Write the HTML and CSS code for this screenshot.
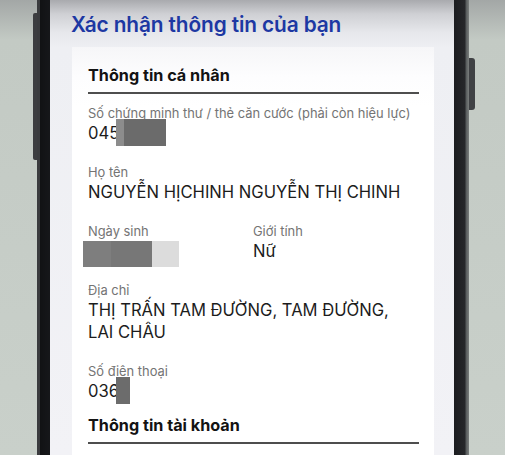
FILE: index.html
```html
<!DOCTYPE html>
<html lang="vi">
<head>
<meta charset="utf-8">
<link rel="stylesheet" href="styles.css">
</head>
<body>
<div class="scene">
  <div class="bg bg-left"></div>
  <div class="frame frame-left"><span class="btn btn-left"></span></div>
  <div class="screen">
    <h1 class="title">Xác nhận thông tin của bạn</h1>
    <div class="card">
      <div class="section-title">Thông tin cá nhân</div>
      <div class="divider"></div>
      <div class="fields">
        <div class="field">
          <div class="label">Số chứng minh thư / thẻ căn cước (phải còn hiệu lực)</div>
          <div class="value">045<span class="redact r-id"><span class="r-a"></span><span class="r-b"></span></span></div>
        </div>
        <div class="field">
          <div class="label">Họ tên</div>
          <div class="value">NGUYỄN HỊCHINH NGUYỄN THỊ CHINH</div>
        </div>
        <div class="field two-col">
          <div class="col">
            <div class="label">Ngày sinh</div>
            <div class="value"><span class="redact r-dob"><span class="d-a"></span><span class="d-b"></span><span class="d-c"></span></span></div>
          </div>
          <div class="col">
            <div class="label">Giới tính</div>
            <div class="value">Nữ</div>
          </div>
        </div>
        <div class="field">
          <div class="label">Địa chỉ</div>
          <div class="value">THỊ TRẤN TAM ĐƯỜNG, TAM ĐƯỜNG,<br>LAI CHÂU</div>
        </div>
        <div class="field">
          <div class="label">Số điện thoại</div>
          <div class="value">036<span class="redact r-phone"></span></div>
        </div>
      </div>
      <div class="section-title second">Thông tin tài khoản</div>
      <div class="divider"></div>
    </div>
  </div>
  <div class="frame frame-right"><span class="btn btn-right"></span></div>
  <div class="bg bg-right"></div>
</div>
</body>
</html>
```

FILE: styles.css
```css
html, body {
  margin: 0;
  padding: 0;
  width: 505px;
  height: 455px;
  overflow: hidden;
  background: #c8cfc9;
  font-family: "Inter", "Noto Sans", sans-serif;
}

.scene {
  display: flex;
  width: 505px;
  height: 455px;
  background: linear-gradient(to bottom, #a3a7a6 0, #c3cac4 40px, #c9d0ca 100%);
}

.bg-left { width: 37px; flex: none; }
.bg-right { flex: 1; }

.frame {
  flex: none;
  position: relative;
  height: 455px;
}
.frame-left {
  width: 13px;
  background: linear-gradient(to right, #3a3b3e 0, #3a3b3e 3px, #111214 3px, #16171a 100%);
}
.frame-right {
  width: 15px;
  background: linear-gradient(to right, #1c1d20 0, #26272a 11px, #55595a 12px, #7a7e7d 15px);
}

.btn {
  position: absolute;
  background: #3c3d40;
}
.btn-left {
  left: -4px;
  top: 13px;
  width: 4px;
  height: 147px;
  border-radius: 2px 0 0 2px;
}
.btn-right {
  right: -6px;
  top: 58px;
  width: 6px;
  height: 52px;
  border-radius: 0 3px 3px 0;
  background: #404245;
}

.screen {
  flex: none;
  width: 404px;
  height: 455px;
  overflow: hidden;
  background: linear-gradient(to bottom, #a9aaae 0, #cfd0d4 14px, #e6e7eb 32px, #eeeff3 48px, #f2f2f6 100%);
}

.title {
  margin: 11px 0 0 21px;
  font-size: 20.8px;
  line-height: 28px;
  font-weight: 600;
  color: #1d38a3;
  letter-spacing: -0.1px;
}

.card {
  margin: 8px 0 0 22px;
  width: 362px;
  height: 420px;
  box-sizing: border-box;
  padding: 16px 15px 0 16px;
  background: linear-gradient(to bottom, #f6f6f8 0, #fdfdfe 30px, #ffffff 60px);
}

.section-title {
  font-size: 16.2px;
  line-height: 24px;
  font-weight: 700;
  color: #131313;
}
.section-title.second {
  margin-top: 11px;
}

.divider {
  height: 2px;
  margin-top: 5px;
  background: #4e4e4e;
}

.fields {
  display: flex;
  flex-direction: column;
  gap: 21px;
  padding-top: 12px;
}

.two-col {
  display: grid;
  grid-template-columns: 165px 1fr;
}

.label {
  font-size: 12.9px;
  line-height: 16px;
  color: #747474;
}

.value {
  font-size: 16.6px;
  line-height: 22px;
  color: #1c1c1c;
}

.redact {
  display: inline-flex;
  vertical-align: top;
}
.r-id {
  margin-left: -3px;
  margin-top: -3px;
  height: 27px;
  margin-bottom: -5px;
}
.r-a { width: 8px; background: #8c8c8c; }
.r-b { width: 42px; background: #6b6b6b; }

.r-dob {
  margin-left: -5px;
  margin-top: 1px;
  height: 26px;
  margin-bottom: -5px;
}
.d-a { width: 28px; background: #7e7e7e; }
.d-b { width: 41px; background: #777777; }
.d-c { width: 27px; background: #dcdcdc; }

.r-phone {
  width: 14px;
  height: 27px;
  margin-left: -3px;
  margin-top: -3px;
  margin-bottom: -5px;
  background: #6c6c6c;
}
```
